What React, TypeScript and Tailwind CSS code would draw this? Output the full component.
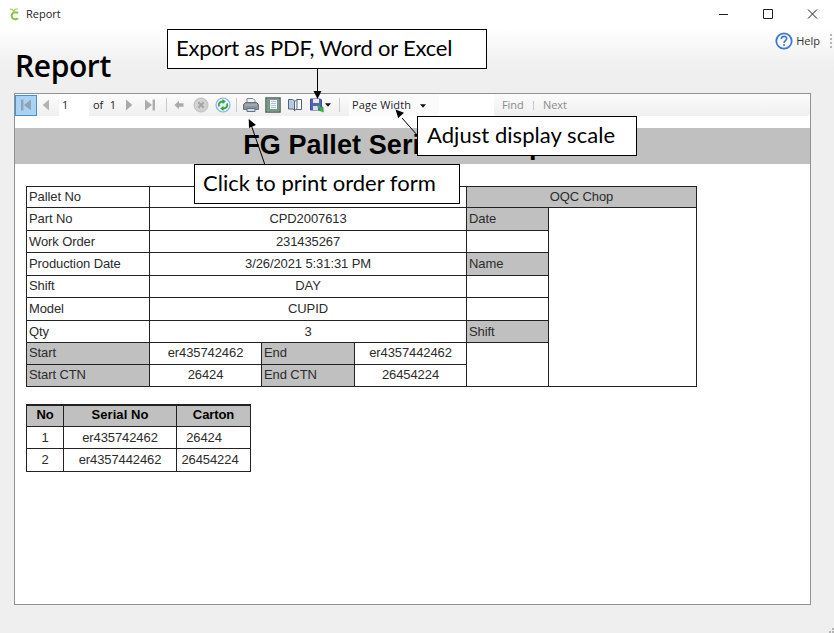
import React from "react";

const UI = "font-['Open_Sans','Noto_Sans',sans-serif]";

const Slot = ({ w, children }: { w: string; children?: React.ReactNode }) => (
  <div className={`${w} flex h-full shrink-0 items-center justify-center`}>{children}</div>
);

const Caret = () => (
  <svg width="6" height="4" viewBox="0 0 6 4"><path d="M0 .3h6L3 3.7z" fill="#111" /></svg>
);

const Divider = () => <div className="h-[14px] w-px bg-[#c9c9c9]" />;

function Toolbar() {
  return (
    <div className={`${UI} flex h-[22px] items-center rounded-r-sm bg-linear-to-b from-[#fcfcfc] to-[#efefef] text-[11px] text-[#1e1e2a]`}>
      <div className="flex h-[21px] w-[22px] shrink-0 items-center justify-center border border-[#4a8fca] bg-[#a9d3f5]">
        <svg width="12" height="12" viewBox="0 0 12 12" fill="#8fa3b5">
          <path d="M1 .5h2.400v11H1zM11 .5v11L4 6z" />
        </svg>
      </div>
      <Slot w="w-[18px]">
        <svg width="8" height="12" viewBox="0 0 8 12"><path d="M7 .5v11L.7 6z" fill="#b3b3b3" /></svg>
      </Slot>
      <div className="ml-[4px] flex h-full w-[30px] shrink-0 items-center bg-white pl-[3px]">1</div>
      <div className="flex w-[29px] shrink-0 items-center justify-between pl-[4px] pr-[2px]"><span>of</span><span>1</span></div>
      <Slot w="w-[21px]">
        <svg width="8" height="12" viewBox="0 0 8 12"><path d="M1 .5v11L7.300 6z" fill="#a9a9a9" /></svg>
      </Slot>
      <Slot w="w-[22px]">
        <svg width="12" height="12" viewBox="0 0 12 12" fill="#adadad"><path d="M1 .5v11L8 6zM8.600.5H11v11H8.600z" /></svg>
      </Slot>
      <Slot w="w-[11px]"><Divider /></Slot>
      <Slot w="w-[14px]">
        <svg width="10" height="10" viewBox="0 0 10 10"><path d="M.5 5 5 .8v2.500h4.500v3.400H5v2.500z" fill="#aaa" /></svg>
      </Slot>
      <Slot w="w-[29px]">
        <svg width="16" height="16" viewBox="0 0 16 16">
          <circle cx="8" cy="8" r="7" fill="#d2d2d2" stroke="#bcbcbc" />
          <path d="m5.300 5.300 5.400 5.400m0-5.400-5.400 5.400" stroke="#a5a5a5" strokeWidth="2" />
        </svg>
      </Slot>
      <Slot w="w-[15px]">
        <svg width="16" height="16" viewBox="0 0 16 16" className="shrink-0">
          <circle cx="8" cy="8" r="7" fill="#e6f2fd" stroke="#83b3df" strokeWidth="1.200" />
          <path d="M4 9.500c-1-3 .8-5 4-5M12 6.500c1 3-.8 5-4 5" fill="none" stroke="#35a33b" strokeWidth="1.800" />
          <path d="M7.500 2v5l3.300-2.500zM8.500 14V9l-3.300 2.500z" fill="#35a33b" />
        </svg>
      </Slot>
      <Slot w="w-[13px]"><Divider /></Slot>
      <Slot w="w-[16px]">
        <svg width="16" height="16" viewBox="0 0 16 16" className="shrink-0">
          <path d="M4 6V1.500h6L12 3.500V6" fill="#eef1f5" stroke="#7d8590" />
          <path d="M2.500 5.500h11l2 2v5H.5v-5z" fill="#8e949d" stroke="#69717c" />
          <path d="M2 8h12" stroke="#b4bac3" />
          <path d="M4 11.500h8v3H4z" fill="#c9def4" stroke="#69717c" />
        </svg>
      </Slot>
      <Slot w="w-[28px]">
        <svg width="16" height="16" viewBox="0 0 16 16">
          <path d="M1 1h14v14H1z" fill="#fff" stroke="#4d5d5c" strokeWidth="1.500" />
          <path d="M2 2h2.500v12H2zM12.500 2H14v12h-1.500z" fill="#6ba577" />
          <path d="M2 12.700h12V14H2z" fill="#6aa679" />
          <path d="M4.500 2.500h8v10h-8z" fill="#f2f6fc" stroke="#56646e" strokeWidth=".7" />
          <path d="M6 4.500h5m-5 2h5m-5 2h5m-5 2h5" stroke="#b4bfce" />
        </svg>
      </Slot>
      <Slot w="w-[16px]">
        <svg width="16" height="16" viewBox="0 0 16 16" className="shrink-0">
          <path d="M1.500 2.500h4l2 1.300v9l-2-.8h-4z" fill="#bccadd" stroke="#52647d" />
          <path d="M7.500 4.800 10 2.500v9l-2.500 2.300zM10 2.500h4.500v10H9.200" fill="#f8fbff" stroke="#52647d" />
        </svg>
      </Slot>
      <Slot w="w-[28px]">
        <svg width="16" height="16" viewBox="0 0 16 16">
          <path d="M1.500 2h10l1 1v10h-11z" fill="#5662b8" stroke="#3f4b9f" />
          <path d="M4 2h6v4H4z" fill="#e7ecff" />
          <path d="M4 9h5v4H4z" fill="#d6dcf2" />
          <path d="M8 8.500h3l1.200 2.200 1.800-1 .5 5.300-5-1.700 1.700-1z" fill="#3db341" stroke="#2a9432" strokeWidth=".5" />
        </svg>
      </Slot>
      <div className="-ml-[7px] flex w-[8px] shrink-0 justify-center"><Caret /></div>
      <div className="flex w-[14px] shrink-0 justify-center"><Divider /></div>
      <div className="ml-[3px] flex h-full w-[90px] shrink-0 items-center justify-between bg-[#fbfbfb] pl-[3px] pr-[13px] pt-[1px]">
        <span className="whitespace-nowrap tracking-[0.1px]">Page Width</span><Caret />
      </div>
      <div className="h-full w-[55px] shrink-0 bg-white" />
      <span className="ml-[8px] w-[27px] shrink-0 text-[#8b8b8b]">Find</span>
      <div className="ml-[4px] h-[9px] w-px bg-[#c6c6c6]" />
      <span className="ml-[9px] text-[#8b8b8b]">Next</span>
    </div>
  );
}

type CellProps = { children?: React.ReactNode; label?: boolean; shade?: boolean; raised?: boolean; span?: string };
const Cell = ({ children, label, shade, raised, span = "" }: CellProps) => (
  <div className={`flex items-center whitespace-nowrap border-b border-r border-[#222] ${label ? "pl-[2px]" : "justify-center"} ${raised ? "pb-[2px]" : ""} ${shade ? "bg-[#c0c0c0]" : "bg-white"} ${span}`}>
    <span className="-mt-[1px] leading-none">{children}</span>
  </div>
);

function PalletTable() {
  return (
    <div className="ml-[11px] mt-[22px] grid w-[671px] grid-cols-[123px_112px_93px_112px_82px_148px] grid-rows-[21px_23px_22px_23px_22px_23px_22px_22px_22px] border-l border-t border-[#222]">
      <Cell label>Pallet No</Cell><Cell span="col-span-3" /><Cell shade span="col-span-2">OQC Chop</Cell>
      <Cell label>Part No</Cell><Cell span="col-span-3">CPD2007613</Cell><Cell label shade>Date</Cell><Cell span="row-span-8" />
      <Cell label>Work Order</Cell><Cell span="col-span-3">231435267</Cell><Cell />
      <Cell label>Production Date</Cell><Cell span="col-span-3">3/26/2021 5:31:31 PM</Cell><Cell label shade>Name</Cell>
      <Cell label raised>Shift</Cell><Cell raised span="col-span-3">DAY</Cell><Cell />
      <Cell label>Model</Cell><Cell span="col-span-3">CUPID</Cell><Cell />
      <Cell label>Qty</Cell><Cell span="col-span-3">3</Cell><Cell label shade>Shift</Cell>
      <Cell label shade raised>Start</Cell><Cell raised>er435742462</Cell><Cell label shade raised>End</Cell><Cell raised>er4357442462</Cell><Cell span="row-span-2" />
      <Cell label shade raised>Start CTN</Cell><Cell raised>26424</Cell><Cell label shade raised>End CTN</Cell><Cell raised>26454224</Cell>
    </div>
  );
}

function SerialTable() {
  return (
    <div className="ml-[11px] mt-[17px] grid w-[225px] grid-cols-[37px_113px_74px] grid-rows-[21px_22px_23px] border-l border-t-2 border-[#222]">
      <Cell shade raised><b className="text-black">No</b></Cell>
      <Cell shade raised><b className="tracking-[0.05px] text-black">Serial No</b></Cell>
      <Cell shade raised><b className="text-black">Carton</b></Cell>
      <Cell>1</Cell><Cell>er435742462</Cell><Cell><span className="mr-[19px]">26424</span></Cell>
      <Cell>2</Cell><Cell>er4357442462</Cell><Cell><span className="mr-[7px]">26454224</span></Cell>
    </div>
  );
}

const Callout = ({ place, children }: { place: string; children: React.ReactNode }) => (
  <div className={`absolute flex h-[40px] items-center whitespace-nowrap border border-black bg-white pb-[2px] font-['Lato',sans-serif] text-[22px] leading-none text-black ${place}`}>
    {children}
  </div>
);

export default function App() {
  return (
    <div className="relative flex h-[633px] w-[834px] flex-col overflow-hidden bg-[#efefef]">
      <header className={`${UI} flex h-[28px] shrink-0 items-center bg-white text-[11px] text-[#222]`}>
        <svg className="ml-[9px]" width="11" height="13" viewBox="0 0 11 13">
          <path d="M9 5.200C7.700 4 2.700 3.700 2.700 7.800c0 4 4.400 4.100 6.200 2.500" fill="none" stroke="#8cc43f" strokeWidth="2" />
          <path d="M1 1.200c2 0 3 .5 3.800 2C5.400 1.500 6.700.8 8.600 1" fill="none" stroke="#a5cf69" strokeWidth="1.300" />
        </svg>
        <span className="ml-[6px]">Report</span>
        <svg className="ml-auto mr-[15px]" width="102" height="14" viewBox="0 0 102 14" fill="none" stroke="#222">
          <path d="M2 7.500h9M91 2.500l9 9m0-9-9 9" />
          <path d="M46.500 2.500h9v9h-9z" />
        </svg>
      </header>
      <section className="flex h-[65px] shrink-0 items-start justify-between bg-linear-to-b from-white to-[#efefef] to-60%">
        <h1 className={`${UI} ml-[15px] mt-[18px] text-[30px] font-semibold leading-[40px] tracking-[-0.4px] text-black`}>Report</h1>
        <div className={`${UI} mt-[4px] flex items-center text-[11px] text-[#333]`}>
          <svg width="18" height="18" viewBox="0 0 18 18">
            <circle cx="9" cy="9" r="7.700" fill="#f5f9ff" stroke="#3f79c5" strokeWidth="1.800" />
            <path d="M6.300 7c0-3.500 5.400-3.300 5.400-.4C11.700 8.600 9 8.600 9 11" fill="none" stroke="#3f79c5" strokeWidth="1.600" />
            <circle cx="9" cy="13" r="1" fill="#3f79c5" />
          </svg>
          <span className="ml-[3px] font-medium">Help</span>
          <div className="ml-[10px] mr-[2px] h-[14px] border-l-2 border-dotted border-[#b5b5b5]" />
        </div>
      </section>
      <main className="ml-[14px] h-[512px] w-[797px] border border-[#929292] bg-white font-['Liberation_Sans',Arial,sans-serif] text-[13px] tracking-[-0.1px] text-[#2c2c2c]">
        <Toolbar />
        <h2 className="mt-[12px] flex h-[36px] items-center justify-center whitespace-nowrap bg-[#c0c0c0] pb-[1px] text-[27px] font-bold tracking-[0.1px] text-black">
          FG Pallet Serial No Report
        </h2>
        <PalletTable />
        <SerialTable />
      </main>
      <div className="absolute bottom-0 right-0 size-[5px] border-b-2 border-r-2 border-dotted border-[#b4b4b4]" />
      <svg className="absolute inset-0" width="834" height="633" viewBox="0 0 834 633">
        <path d="M317.500 68v24M265 165l-13.500-39M418 136l-16-18" stroke="#000" fill="none" />
        <path d="M313.500 91h8l-4 8zM248.700 119l7.300 6-7 3zM395.500 109.500l8.500 3.300-5.800 5.200z" />
      </svg>
      <Callout place="left-[167px] top-[29px] w-[320px] pl-[8px] tracking-[-0.22px]">Export as PDF, Word or Excel</Callout>
      <Callout place="left-[417px] top-[116px] w-[220px] pl-[9px] tracking-[0.05px]">Adjust display scale</Callout>
      <Callout place="left-[194px] top-[164px] w-[266px] pl-[8px]">Click to print order form</Callout>
    </div>
  );
}
